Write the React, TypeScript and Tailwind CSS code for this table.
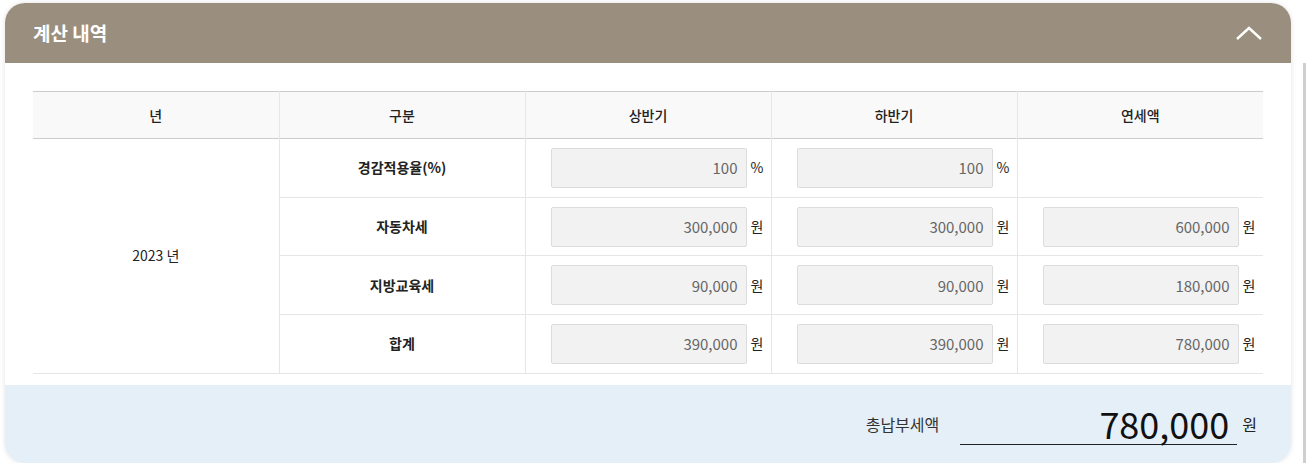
const font = { fontFamily: '"Noto Sans CJK KR", "Noto Sans", sans-serif' };

type Row = { label: string; first: string; second: string; total?: string; unit: string };

const rows: Row[] = [
  { label: '경감적용율(%)', first: '100', second: '100', unit: '%' },
  { label: '자동차세', first: '300,000', second: '300,000', total: '600,000', unit: '원' },
  { label: '지방교육세', first: '90,000', second: '90,000', total: '180,000', unit: '원' },
  { label: '합계', first: '390,000', second: '390,000', total: '780,000', unit: '원' },
];

function ValueCell({ value, unit }: { value?: string; unit: string }) {
  if (!value) return <td className="border-l border-[#e6e6e6]" />;
  return (
    <td className="border-l border-[#e6e6e6] pl-[25px] pr-[4px]">
      <div className="flex items-center gap-[4px]">
        <input
          readOnly
          value={value}
          className="h-[40px] w-[196px] shrink-0 rounded-[2px] border border-[#dcdcdc] bg-[#f2f2f2] pr-[8px] text-right text-[15px] text-[#666] outline-none"
        />
        <span className="text-[14px] text-[#222]">{unit}</span>
      </div>
    </td>
  );
}

export default function App() {
  return (
    <div className="flex h-[463px] w-[1306px] bg-white" style={font}>
      <div className="ml-[5px] mt-[3px] flex w-[1286px] flex-col overflow-hidden rounded-[20px] bg-white shadow-[0_0_5px_rgba(0,0,0,0.12)]">
        <div className="flex h-[60px] shrink-0 items-center justify-between bg-[#9a8f7e] pl-[28px] pr-[28px]">
          <h2 className="text-[19px] font-bold text-white">계산 내역</h2>
          <svg width="28" height="16" viewBox="0 0 28 16" fill="none">
            <path d="M2 14 L14 3 L26 14" stroke="white" strokeWidth="2.4" />
          </svg>
        </div>
        <div className="px-[28px] pt-[28px]">
          <table className="w-full table-fixed border-collapse text-[14px] text-[#222]">
            <thead>
              <tr className="h-[47px] border-y border-[#cccccc] bg-[#f9f9f9]">
                {['년', '구분', '상반기', '하반기', '연세액'].map((h, i) => (
                  <th key={h} className={`font-medium ${i > 0 ? 'border-l border-[#e6e6e6]' : ''}`}>
                    {h}
                  </th>
                ))}
              </tr>
            </thead>
            <tbody>
              {rows.map((r, i) => (
                <tr key={r.label} className="h-[58.7px] border-b border-[#e6e6e6]">
                  {i === 0 && (
                    <td rowSpan={4} className="text-center">
                      2023 년
                    </td>
                  )}
                  <td className="border-l border-[#e6e6e6] text-center font-bold">{r.label}</td>
                  <ValueCell value={r.first} unit={r.unit} />
                  <ValueCell value={r.second} unit={r.unit} />
                  <ValueCell value={r.total} unit={r.unit} />
                </tr>
              ))}
            </tbody>
          </table>
        </div>
        <div className="mt-[11px] flex flex-1 items-center justify-end bg-[#e5eff8] pr-[34px]">
          <span className="mr-[21px] text-[16px] text-[#333]">총납부세액</span>
          <div className="flex h-[42px] w-[277px] items-center justify-end border-b border-[#222] pr-[8px] text-[36px] leading-none text-[#111]">
            780,000
          </div>
          <span className="ml-[5px] text-[16px] text-[#222]">원</span>
        </div>
      </div>
      <div className="ml-[12px] mt-[63px] h-[400px] w-[3px] bg-[#cfcfcf]" />
    </div>
  );
}
